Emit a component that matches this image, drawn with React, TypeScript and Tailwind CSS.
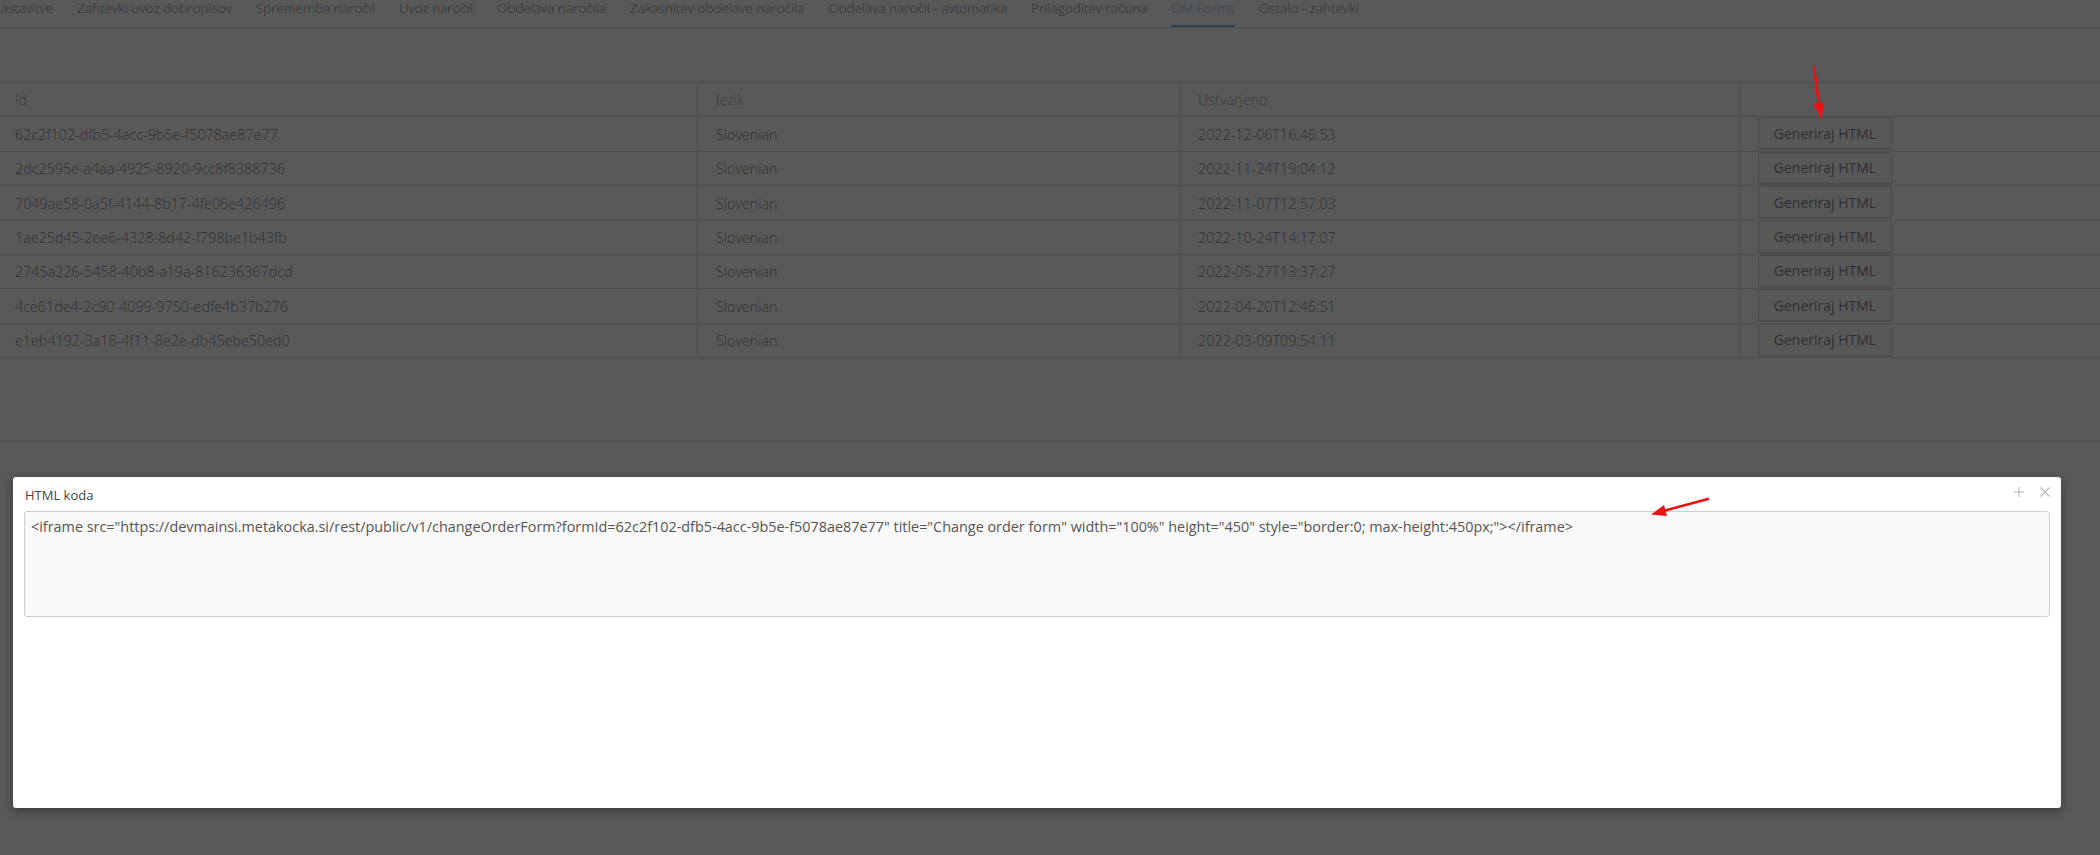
import React from 'react';

const TABS = [
  'Nastavitve',
  'Zahtevki uvoz dobropisov',
  'Sprememba naročil',
  'Uvoz naročil',
  'Obdelava naročila',
  'Zakasnitev obdelave naročila',
  'Obdelava naročil - avtomatika',
  'Prilagoditev računa',
  'OM Forms',
  'Ostalo - zahtevki',
];

const FORMS = [
  { id: '62c2f102-dfb5-4acc-9b5e-f5078ae87e77', lang: 'Slovenian', created: '2022-12-06T16:46:53' },
  { id: '2dc2595e-a4aa-4925-8920-9cc8f8388736', lang: 'Slovenian', created: '2022-11-24T19:04:12' },
  { id: '7049ae58-0a5f-4144-8b17-4fe06e426496', lang: 'Slovenian', created: '2022-11-07T12:57:03' },
  { id: '1ae25d45-2ee6-4328-8d42-f798be1b43fb', lang: 'Slovenian', created: '2022-10-24T14:17:07' },
  { id: '2745a226-5458-40b8-a19a-816236367dcd', lang: 'Slovenian', created: '2022-05-27T13:37:27' },
  { id: '4ce61de4-2c90-4099-9750-edfe4b37b276', lang: 'Slovenian', created: '2022-04-20T12:46:51' },
  { id: 'e1eb4192-3a18-4f11-8e2e-db45ebe50ed0', lang: 'Slovenian', created: '2022-03-09T09:54:11' },
];

const HTML_CODE =
  '<iframe src="https://devmainsi.metakocka.si/rest/public/v1/changeOrderForm?formId=62c2f102-dfb5-4acc-9b5e-f5078ae87e77" title="Change order form" width="100%" height="450" style="border:0; max-height:450px;"></iframe>';

const App: React.FC = () => {
  return (
    <div className="relative w-[2100px] h-[855px] overflow-hidden bg-white font-['Open_Sans','Liberation_Sans',sans-serif]">
      {/* Tabs (strip scrolled a bit to the left) */}
      <div className="h-[28px] border-b border-[#c8c8c8] overflow-hidden">
        <div className="flex -ml-[21px] h-full">
          {TABS.map((tab) => (
            <div
              key={tab}
              className={`mx-[12px] h-full whitespace-nowrap text-[13.5px] font-light leading-[17px] ${
                tab === 'OM Forms' ? 'text-[#3f8fd8] border-b-2 border-[#3f8fd8]' : 'text-[#3a3a3a]'
              }`}
            >
              {tab}
            </div>
          ))}
        </div>
      </div>

      {/* Toolbar space */}
      <div className="h-[54px]" />

      {/* Table */}
      <div className="border-t border-[#c8c8c8] text-[14.3px] font-light">
        <div className="grid grid-cols-[698px_483px_559px_1fr] h-[34.375px] border-b border-[#c8c8c8] text-[#666]">
          <div className="flex items-center pl-[15px] border-r border-[#c8c8c8]">Id</div>
          <div className="flex items-center pl-[18px] border-r border-[#c8c8c8]">Jezik</div>
          <div className="flex items-center pl-[17px] border-r border-[#c8c8c8]">Ustvarjeno</div>
          <div />
        </div>
        {FORMS.map((f) => (
          <div
            key={f.id}
            className="grid grid-cols-[698px_483px_559px_1fr] h-[34.375px] border-b border-[#c8c8c8] text-[#333]"
          >
            <div className="flex items-center pl-[15px] pt-[1px] border-r border-[#c8c8c8]">{f.id}</div>
            <div className="flex items-center pl-[18px] pt-[1px] border-r border-[#c8c8c8]">{f.lang}</div>
            <div className="flex items-center pl-[17px] pt-[1px] border-r border-[#c8c8c8]">{f.created}</div>
            <div className="flex items-start pl-[18px]">
              <button className="h-[32px] w-[134px] rounded-[3px] border border-[#bbb] bg-[#fafafa] text-[14px] font-normal text-[#333] shadow-[0_1px_1px_rgba(0,0,0,0.2)]">
                Generiraj HTML
              </button>
            </div>
          </div>
        ))}
      </div>

      {/* Footer space */}
      <div className="h-[84px] border-b border-[#c8c8c8]" />

      {/* Backdrop */}
      <div className="absolute inset-0 bg-[rgba(44,44,44,0.79)]" />

      {/* Modal */}
      <div className="absolute left-[13px] top-[477px] w-[2048px] h-[331px] bg-white rounded-[3px] shadow-[0_3px_10px_rgba(0,0,0,0.35)] px-[11px] pt-[8px]">
        <div className="flex items-start justify-between">
          <div className="pl-[1px] text-[13px] leading-[20px] text-[#444]">HTML koda</div>
          <div className="flex items-center gap-[16px] pt-[2px] text-[#b5b5b5]">
            <svg width="10" height="10" viewBox="0 0 10 10" stroke="currentColor" strokeWidth="1.1">
              <path d="M5 0v10M0 5h10" />
            </svg>
            <svg width="10" height="10" viewBox="0 0 10 10" stroke="currentColor" strokeWidth="1.1">
              <path d="M0.5 0.5l9 9M9.5 0.5l-9 9" />
            </svg>
          </div>
        </div>
        <textarea
          readOnly
          value={HTML_CODE}
          className="mt-[6px] block w-full h-[106px] resize-none rounded-[3px] border border-[#cfcfcf] bg-[#f9f9f9] px-[6px] pt-[5px] text-[14.4px] leading-[20px] text-[#555] outline-none font-['Open_Sans','Liberation_Sans',sans-serif]"
        />
      </div>

      {/* Annotation arrows */}
      <svg className="absolute inset-0 pointer-events-none" width="2100" height="855" viewBox="0 0 2100 855">
        <line x1="1814" y1="67" x2="1819" y2="104" stroke="#ee1111" strokeWidth="2.5" strokeLinecap="round" />
        <polygon points="1821,119 1824.5,102 1813.5,103.7" fill="#ee1111" />
        <line x1="1708" y1="499" x2="1665" y2="510.5" stroke="#ee1111" strokeWidth="2.5" strokeLinecap="round" />
        <polygon points="1651,514.5 1667,516 1664,505" fill="#ee1111" />
      </svg>
    </div>
  );
};

export default App;
